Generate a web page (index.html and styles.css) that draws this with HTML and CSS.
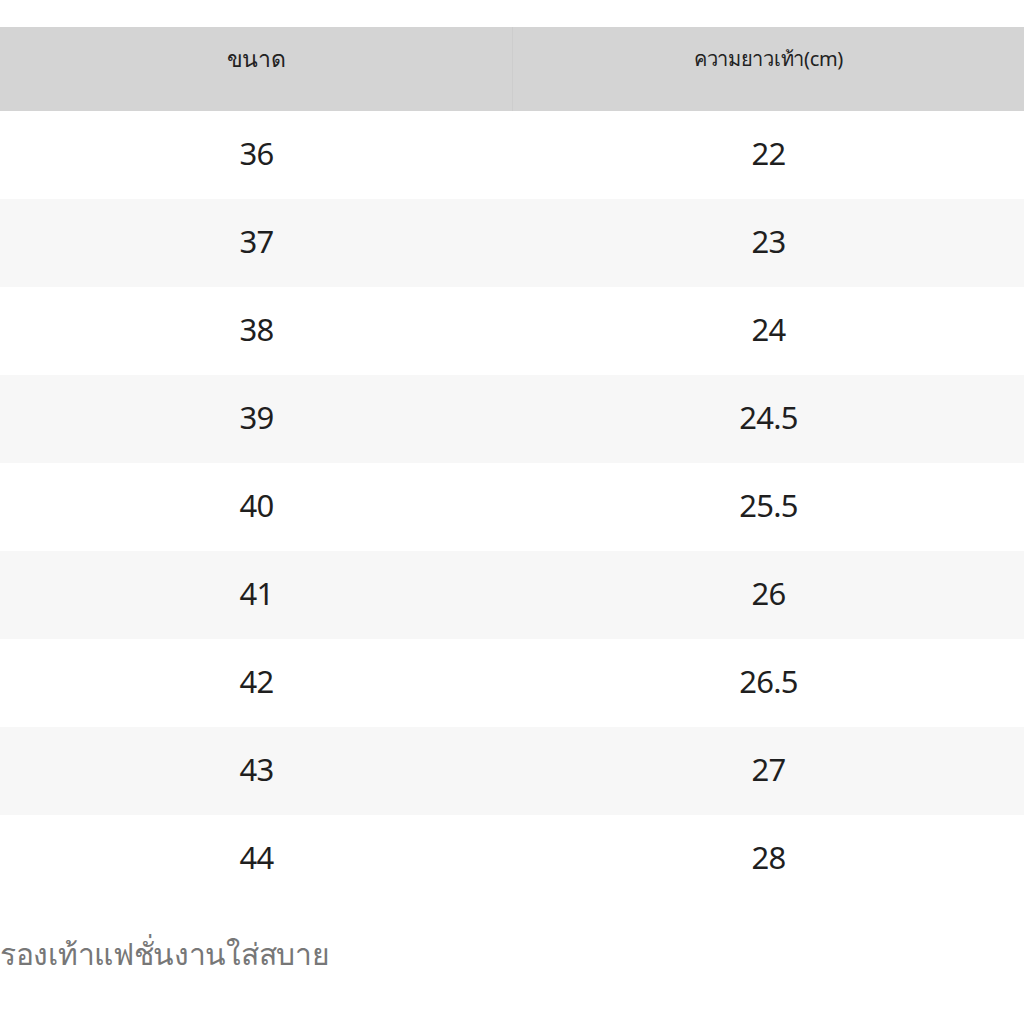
FILE: index.html
```html
<!DOCTYPE html>
<html lang="th">
<head>
<meta charset="utf-8">
<link rel="stylesheet" href="styles.css">
</head>
<body>
<div class="page">
  <div class="table">
    <div class="row head">
      <div class="cell c1">ขนาด</div>
      <div class="cell c2 small">ความยาวเท้า(cm)</div>
    </div>
    <div class="row"><div class="cell">36</div><div class="cell">22</div></div>
    <div class="row alt"><div class="cell">37</div><div class="cell">23</div></div>
    <div class="row"><div class="cell">38</div><div class="cell">24</div></div>
    <div class="row alt"><div class="cell">39</div><div class="cell">24.5</div></div>
    <div class="row"><div class="cell">40</div><div class="cell">25.5</div></div>
    <div class="row alt"><div class="cell">41</div><div class="cell">26</div></div>
    <div class="row"><div class="cell">42</div><div class="cell">26.5</div></div>
    <div class="row alt"><div class="cell">43</div><div class="cell">27</div></div>
    <div class="row"><div class="cell">44</div><div class="cell">28</div></div>
  </div>
  <p class="caption">รองเท้าแฟชั่นงานใส่สบาย</p>
</div>
</body>
</html>
```
FILE: styles.css
```css
html, body {
  margin: 0;
  padding: 0;
  background: #ffffff;
}
.page {
  width: 1024px;
  height: 1024px;
  padding-top: 27px;
  box-sizing: border-box;
  font-family: "Noto Sans", "Open Sans", "DejaVu Sans", sans-serif;
  color: #1f1f1f;
}
.row {
  display: grid;
  grid-template-columns: 513px 511px;
  height: 88px;
}
.row.alt {
  background: #f7f7f7;
}
.row.head {
  height: 84px;
  background: #d4d4d4;
}
.cell {
  display: flex;
  align-items: center;
  justify-content: center;
  padding-bottom: 5px;
  font-size: 31px;
  letter-spacing: -0.8px;
}
.head .cell {
  font-size: 23px;
  padding-bottom: 20px;
  letter-spacing: -0.3px;
  color: #222;
}
.head .c1 {
  border-right: 1px solid #cdcdcd;
}
.head .small {
  font-size: 20px;
}
.caption {
  margin: 28px 0 0 0;
  font-size: 30px;
  color: #777777;
  letter-spacing: -0.3px;
}
```
